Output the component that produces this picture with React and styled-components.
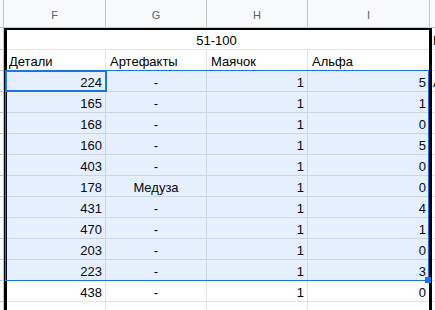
import React from 'react';
import styled, { createGlobalStyle } from 'styled-components';

const GlobalStyle = createGlobalStyle`
  html, body {
    margin: 0;
    padding: 0;
    background: #ffffff;
    overflow: hidden;
  }
  body {
    font-family: "Liberation Sans", Arial, sans-serif;
  }
`;

const COLS = [
  { key: 'F', width: 102 },
  { key: 'G', width: 101 },
  { key: 'H', width: 101 },
  { key: 'I', width: 122 },
];

const DATA = [
  ['224', '-', '1', '5', 'А'],
  ['165', '-', '1', '1'],
  ['168', '-', '1', '0'],
  ['160', '-', '1', '5'],
  ['403', '-', '1', '0'],
  ['178', 'Медуза', '1', '0'],
  ['431', '-', '1', '4'],
  ['470', '-', '1', '1'],
  ['203', '-', '1', '0'],
  ['223', '-', '1', '3'],
  ['438', '-', '1', '0'],
  ['', '', '', ''],
];

const Sheet = styled.div`
  position: relative;
  width: 435px;
  height: 310px;
  overflow: hidden;
  background: #fff;
`;

const Row = styled.div`
  display: flex;
  height: ${(p) => p.$h}px;
`;

const Cell = styled.div`
  box-sizing: border-box;
  flex: 0 0 ${(p) => p.$w}px;
  height: 100%;
  display: flex;
  align-items: flex-end;
  justify-content: ${(p) => p.$align || 'flex-start'};
  padding: 0 3px 1px ${(p) => p.$padL || 3}px;
  border-right: 1px solid #e2e3e3;
  border-bottom: 1px solid #e2e3e3;
  font-size: 13px;
  line-height: 15px;
  color: #000;
  white-space: nowrap;
  overflow: hidden;
`;

const RowHead = styled.div`
  box-sizing: border-box;
  flex: 0 0 4px;
  height: 100%;
  background: #f8f9fa;
  border-right: 1px solid #c4c7c5;
  border-bottom: 1px solid #c4c7c5;
`;

const ColHead = styled.div`
  box-sizing: border-box;
  flex: 0 0 ${(p) => p.$w}px;
  height: 100%;
  display: flex;
  align-items: center;
  justify-content: center;
  background: #f8f9fa;
  border-right: 1px solid #c4c7c5;
  border-bottom: 1px solid #c4c7c5;
  font-size: 11px;
  color: #5f6368;
  padding-top: 2px;
`;

const Corner = styled(ColHead)`
  flex: 0 0 4px;
`;

const Merged = styled(Cell)`
  justify-content: center;
  padding-left: 0;
  padding-right: 0;
  border-right-color: transparent;
`;

const ThickFrame = styled.div`
  position: absolute;
  left: 4px;
  top: 28px;
  width: 428px;
  height: 300px;
  box-sizing: border-box;
  border-top: 2px solid #000;
  border-left: 3px solid #000;
  border-right: 3px solid #000;
  pointer-events: none;
`;

const Selection = styled.div`
  position: absolute;
  left: 5px;
  top: 70px;
  width: 424px;
  height: 211px;
  box-sizing: border-box;
  border: 1px solid #1a73e8;
  background: rgba(14, 101, 235, 0.1);
  pointer-events: none;
`;

const ActiveCell = styled.div`
  position: absolute;
  left: 5px;
  top: 70px;
  width: 102px;
  height: 22px;
  box-sizing: border-box;
  border: 2px solid #1a73e8;
  pointer-events: none;
`;

const FillHandle = styled.div`
  position: absolute;
  left: 425px;
  top: 277px;
  width: 6px;
  height: 6px;
  background: #1a73e8;
  pointer-events: none;
`;

export default function App() {
  return (
    <>
      <GlobalStyle />
      <Sheet>
        <Row $h={28}>
          <Corner />
          {COLS.map((c) => (
            <ColHead key={c.key} $w={c.width}>{c.key}</ColHead>
          ))}
          <ColHead $w={40} />
        </Row>

        <Row $h={22}>
          <RowHead />
          <Merged $w={426}>51-100</Merged>
          <Cell $w={40}>П</Cell>
        </Row>

        <Row $h={21}>
          <RowHead />
          <Cell $w={102} $padL={5}>Детали</Cell>
          <Cell $w={101} $padL={4}>Артефакты</Cell>
          <Cell $w={101} $padL={4}>Маячок</Cell>
          <Cell $w={122} $padL={4}>Альфа</Cell>
          <Cell $w={40} />
        </Row>

        {DATA.map((r, i) => (
          <Row key={i} $h={21}>
            <RowHead />
            <Cell $w={102} $align="flex-end">{r[0]}</Cell>
            <Cell $w={101} $align="center">{r[1]}</Cell>
            <Cell $w={101} $align="flex-end">{r[2]}</Cell>
            <Cell $w={122} $align="flex-end">{r[3]}</Cell>
            <Cell $w={40}>{r[4] || ''}</Cell>
          </Row>
        ))}

        <ThickFrame />
        <Selection />
        <ActiveCell />
        <FillHandle />
      </Sheet>
    </>
  );
}
